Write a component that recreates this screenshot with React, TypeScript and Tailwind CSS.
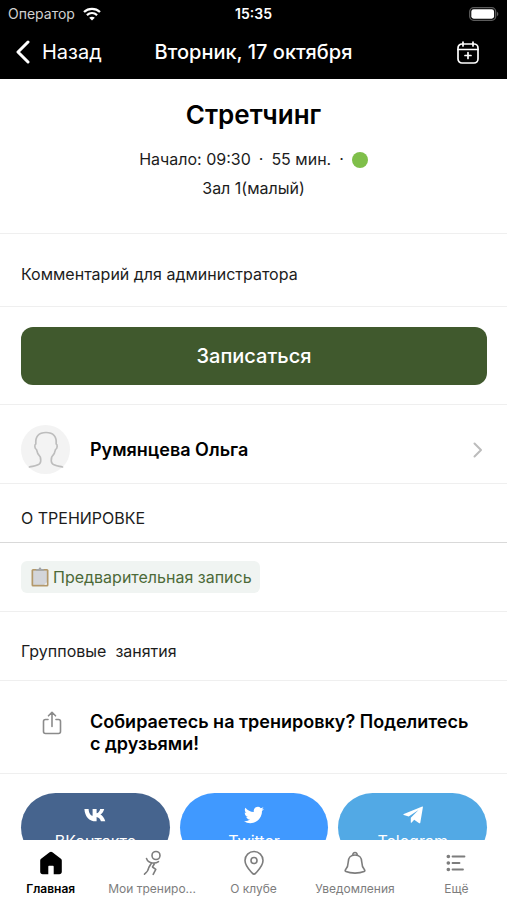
import type { ReactNode } from "react";

function BackIcon() {
  return (
    <svg width="14" height="24" viewBox="0 0 14 24" fill="none" stroke="currentColor" strokeWidth="3" strokeLinecap="round" strokeLinejoin="round" aria-hidden="true">
      <path d="M12 2 2 12l10 10" />
    </svg>
  );
}

function WifiIcon() {
  return (
    <svg width="18" height="14" viewBox="0 0 18 14" fill="none" stroke="currentColor" aria-hidden="true">
      <path d="M1 5C5.5.9 12.500.9 17 5" strokeWidth="2.300" />
      <path d="M3.900 8.100c3-2.700 7.200-2.700 10.200 0" strokeWidth="2.200" />
      <path d="M9 13.600 6.200 10.800c1.600-1.400 4-1.400 5.600 0z" fill="currentColor" stroke="none" />
    </svg>
  );
}

function BatteryIcon() {
  return (
    <svg width="30" height="14" viewBox="0 0 30 14" aria-hidden="true">
      <rect x=".7" y=".7" width="26" height="12.600" rx="4" fill="none" stroke="#5c5c5c" strokeWidth="1.300" />
      <rect x="2.300" y="2.300" width="22.800" height="9.400" rx="2.400" fill="#fff" />
      <path d="M28 4.800c1.800.7 1.800 3.700 0 4.400z" fill="#5c5c5c" />
    </svg>
  );
}

function CalendarPlusIcon() {
  return (
    <svg width="22" height="23" viewBox="0 0 22 23" fill="none" stroke="currentColor" strokeWidth="1.700" strokeLinecap="round" aria-hidden="true">
      <rect x="1" y="3" width="20" height="19" rx="4" />
      <path d="M1 8.500h20M6 1v4M16 1v4M11 11.500v6M8 14.500h6" />
    </svg>
  );
}

function PersonIcon() {
  return (
    <svg width="36" height="38" viewBox="0 0 36 38" fill="none" stroke="#bdbdbd" strokeWidth="1.700" strokeLinecap="round" strokeLinejoin="round" aria-hidden="true">
      <path d="M1.500 36c4-1 8.500-1.300 10.300-3.500 1.200-1.500 1-4.500.5-6.500C10 23.500 8.800 21 8.500 18.500 6.600 18 6.300 13.500 7.800 13 7.200 5.500 10.500 1.500 18 1.500S28.800 5.500 28.200 13c1.500.5 1.200 5-.7 5.500-.3 2.500-1.500 5-3.800 7.500-.5 2-.7 5 .5 6.500C26 34.700 30.500 35 34.500 36" />
    </svg>
  );
}

function ChevronIcon() {
  return (
    <svg width="10" height="16" viewBox="0 0 10 16" fill="none" stroke="#bcbcbc" strokeWidth="2" strokeLinecap="round" strokeLinejoin="round" aria-hidden="true">
      <path d="m1.500 1.500 6.500 6.500-6.500 6.500" />
    </svg>
  );
}

function ClipboardIcon() {
  return (
    <svg width="18" height="20" viewBox="0 0 18 20" aria-hidden="true">
      <rect x=".5" y="2" width="17" height="17.500" rx="1.500" fill="#b3986a" />
      <rect x="2.200" y="3.600" width="13.600" height="14.200" fill="#d3d5da" />
      <path d="M2.200 17.800h13.600v-2.600l-2.600 2.600z" fill="#f1f1f1" />
      <path d="M5 3.800V2.700c0-.4.300-.7.800-.7h1.800C7.800.9 8.200.4 9 .4s1.200.5 1.400 1.600h1.800c.5 0 .8.3.8.7v1.100z" fill="#a3a6aa" />
    </svg>
  );
}

function ShareIcon() {
  return (
    <svg width="20" height="24" viewBox="0 0 20 24" fill="none" stroke="#8b8b8b" strokeWidth="1.600" strokeLinecap="round" strokeLinejoin="round" aria-hidden="true">
      <path d="M6 8.500H3.500a2 2 0 0 0-2 2v10a2 2 0 0 0 2 2h13a2 2 0 0 0 2-2v-10a2 2 0 0 0-2-2H14M10 15.500V1.500M6.500 4.800 10 1.300l3.500 3.500" />
    </svg>
  );
}

function VkIcon() {
  return (
    <svg width="22" height="14" viewBox="0 0 22 14" fill="currentColor" aria-hidden="true">
      <path d="M12 13.300C5 13.300.9 8.200.4.900h4.200c.2 4.500 2.300 6.500 4 6.900V.9h4v4.300c1.500-.2 3-1.900 3.600-4.300h4c-.5 2.600-2.300 4.700-3.800 5.600 1.500.7 3.900 2.800 4.900 6.800h-4.400c-.7-2.300-2.400-4-4.300-4.200v4.200z" />
    </svg>
  );
}

function TwitterIcon() {
  return (
    <svg width="20" height="18" viewBox="0 2 24 20" fill="currentColor" aria-hidden="true">
      <path d="M23.950 4.570a10 10 0 0 1-2.820.77 4.960 4.960 0 0 0 2.160-2.720c-.95.550-2 .95-3.130 1.180a4.920 4.920 0 0 0-8.380 4.480C7.690 8.090 4.070 6.130 1.640 3.160a4.820 4.820 0 0 0-.67 2.480c0 1.710.87 3.210 2.190 4.100a4.900 4.900 0 0 1-2.230-.62v.06a4.920 4.920 0 0 0 3.950 4.830 5 5 0 0 1-2.210.08 4.940 4.940 0 0 0 4.600 3.420A9.870 9.870 0 0 1 0 19.540a14 14 0 0 0 7.560 2.210c9.050 0 14-7.500 14-13.980 0-.21 0-.42-.02-.63a9.940 9.940 0 0 0 2.410-2.570z" />
    </svg>
  );
}

function TelegramIcon() {
  return (
    <svg width="20" height="18" viewBox="0 0 20 18" fill="currentColor" aria-hidden="true">
      <path d="M.8 8.100 19.300.6c.5-.2.700.1.600.6l-2.600 15.500c-.1.600-.6.8-1.100.5l-5-3.500-2.500 2.900c-.4.400-.9.200-.9-.3v-4.500L15.500 3.900 5.700 10.400.8 9.100c-.6-.2-.6-.7 0-1z" />
    </svg>
  );
}

function HomeIcon() {
  return (
    <svg width="24" height="24" viewBox="0 0 24 24" fill="currentColor" aria-hidden="true">
      <path d="M12 .7c.5 0 1 .2 1.400.5l8.500 6.600c.6.500.9 1.100.9 1.800v11.200c0 1.500-1 2.500-2.500 2.500H14.700v-7.500c0-.6-.4-1-1-1h-3.400c-.6 0-1 .4-1 1v7.500H3.700c-1.500 0-2.500-1-2.500-2.500V9.600c0-.7.300-1.300.9-1.800l8.500-6.600c.4-.3.900-.5 1.400-.5z" />
    </svg>
  );
}

function RunnerIcon() {
  return (
    <svg width="24" height="26" viewBox="0 0 24 26" fill="none" stroke="currentColor" strokeWidth="1.600" strokeLinecap="round" strokeLinejoin="round" aria-hidden="true">
      <circle cx="16" cy="5.500" r="4" />
      <path d="M6.500 8.500c1 2.800 3 4.300 6 4.500 2.500.2 4.500-.2 6-1.300M11.500 13l-2.700 4.500M14.500 13.500 12.500 17l3.300 2.300-2.600 5M8.800 17.500c-.4 2.700-2 4.900-4.300 6.700" />
    </svg>
  );
}

function PinIcon() {
  return (
    <svg width="22" height="26" viewBox="0 0 22 26" fill="none" stroke="currentColor" strokeWidth="1.600" strokeLinejoin="round" aria-hidden="true">
      <path d="M11 1.500a9 9 0 0 0-9 9c0 5.500 4.500 9.500 7.500 12.900.9 1 2.100 1 3 0C15.500 20 20 16 20 10.500a9 9 0 0 0-9-9z" />
      <circle cx="11" cy="10.500" r="3" />
    </svg>
  );
}

function BellIcon() {
  return (
    <svg width="24" height="24" viewBox="0 0 24 24" fill="none" stroke="currentColor" strokeWidth="1.600" strokeLinecap="round" strokeLinejoin="round" aria-hidden="true">
      <path d="M12 4c-4.500 0-6.800 3.200-6.800 7.200 0 3.800-1 5.500-2.700 7.500-.6.700-.4 1.600.4 1.900 5 2 13.200 2 18.200 0 .8-.3 1-1.200.4-1.900-1.700-2-2.700-3.700-2.700-7.500C18.800 7.200 16.500 4 12 4z" />
      <path d="M9.800 4.200c0-1.700.8-2.700 2.200-2.700s2.200 1 2.200 2.700" />
    </svg>
  );
}

function ListIcon() {
  return (
    <svg width="20" height="18" viewBox="0 0 20 18" fill="none" stroke="currentColor" strokeLinecap="round" aria-hidden="true">
      <path d="M6.500 2.500h12M6.500 9h7M6.500 15.500h10.500" strokeWidth="1.800" />
      <path d="M2.300 2.500h.1M2.300 9h.1M2.300 15.500h.1" strokeWidth="3.600" />
    </svg>
  );
}

function ShareButton({ color, icon, label }: { color: string; icon: ReactNode; label: string }) {
  return (
    <button type="button" className={`flex h-[69px] flex-1 flex-col items-center rounded-full pt-3 text-base text-white ${color}`}>
      <span className="flex h-5 items-center">{icon}</span>
      <span className="mt-1 leading-6">{label}</span>
    </button>
  );
}

function Tab({ icon, label, active = false }: { icon: ReactNode; label: string; active?: boolean }) {
  return (
    <a
      href="#"
      aria-current={active ? "page" : undefined}
      className={`flex flex-1 flex-col items-center text-xs whitespace-nowrap ${active ? "font-semibold text-black" : "text-[#7d7d7d]"}`}
    >
      <span className="flex h-7 items-center">{icon}</span>
      <span className="mt-1 leading-4">{label}</span>
    </a>
  );
}

export default function App() {
  return (
    <div className="flex h-screen flex-col overflow-hidden bg-white font-['Inter','Liberation_Sans',sans-serif] text-[#1c1c1c]">
      <header className="bg-black pb-[3px] text-white">
        <div className="grid h-7 grid-cols-[1fr_auto_1fr] items-center px-2 text-sm">
          <span className="flex items-center gap-2 text-[#d0d0d0]">
            Оператор
            <span className="text-white"><WifiIcon /></span>
          </span>
          <span className="font-semibold">15:35</span>
          <span className="flex justify-end"><BatteryIcon /></span>
        </div>
        <div className="grid h-12 grid-cols-[1fr_auto_1fr] items-center px-4 text-xl">
          <button type="button" className="flex items-center gap-3 justify-self-start">
            <BackIcon />
            Назад
          </button>
          <h1 className="font-medium">Вторник, 17 октября</h1>
          <button type="button" aria-label="Добавить в календарь" className="justify-self-end px-3">
            <CalendarPlusIcon />
          </button>
        </div>
      </header>

      <main className="min-h-0 flex-1 overflow-y-auto [scrollbar-width:none]">
        <section className="border-b border-[#efefef] pt-5 pb-[30px] text-center">
          <h2 className="mb-3.5 text-[26px] leading-8 font-semibold text-black">Стретчинг</h2>
          <p className="flex items-center justify-center text-base leading-[29px]">
            <span>Начало: 09:30</span>
            <span className="mx-2">·</span>
            <span>55 мин.</span>
            <span className="mx-2">·</span>
            <span className="size-4 rounded-full bg-[#7fbf4a]" />
          </p>
          <p className="text-base leading-[29px]">Зал 1(малый)</p>
        </section>

        <section className="border-b border-[#efefef] pt-7 pr-5 pb-5 pl-[21px]">
          <input
            type="text"
            aria-label="Комментарий для администратора"
            placeholder="Комментарий для администратора"
            className="block h-6 w-full text-base outline-none placeholder:text-[#1c1c1c]"
          />
        </section>

        <section className="border-b border-[#efefef] pt-5 pr-5 pb-[19px] pl-[21px]">
          <button type="button" className="h-[58px] w-full rounded-xl bg-[#40592d] text-xl font-medium text-white">
            Записаться
          </button>
        </section>

        <a href="#" className="flex items-center border-b border-[#efefef] pt-5 pr-6 pb-[9px] pl-[21px]">
          <span className="flex size-[49px] items-center justify-center rounded-full bg-[#f3f3f3]">
            <PersonIcon />
          </span>
          <span className="ml-5 flex-1 text-lg font-semibold text-black">Румянцева Ольга</span>
          <ChevronIcon />
        </a>

        <h3 className="border-b border-[#d9d9d9] pt-[22px] pr-5 pb-3 pl-[21px] text-base">О ТРЕНИРОВКЕ</h3>

        <section className="border-b border-[#efefef] py-[18px] pr-5 pl-[21px]">
          <span className="inline-flex h-8 items-center gap-1 rounded-md bg-[#f0f4f2] px-2 align-top text-base text-[#4c6a38]">
            <span className="pl-0.5"><ClipboardIcon /></span>
            Предварительная запись
          </span>
        </section>

        <p className="border-b border-[#efefef] pt-[27px] pr-5 pb-[17px] pl-[21px] text-base whitespace-pre">Групповые  занятия</p>

        <section className="flex items-start border-b border-[#efefef] pt-[30px] pr-7 pb-[18px] pl-[21px]">
          <span className="flex w-[49px] justify-center pl-3"><ShareIcon /></span>
          <p className="ml-5 flex-1 text-lg leading-[22px] font-semibold text-black">
            Собираетесь на тренировку? Поделитесь с&nbsp;друзьями!
          </p>
        </section>

        <section className="flex gap-2.5 pt-[19px] pr-5 pb-5 pl-[21px]">
          <ShareButton color="bg-[#46648e]" icon={<VkIcon />} label="ВКонтакте" />
          <ShareButton color="bg-[#4099ff]" icon={<TwitterIcon />} label="Twitter" />
          <ShareButton color="bg-[#52a9e5]" icon={<TelegramIcon />} label="Telegram" />
        </section>
      </main>

      <nav className="flex h-15 shrink-0 bg-white pt-[9px]">
        <Tab icon={<HomeIcon />} label="Главная" active />
        <Tab icon={<RunnerIcon />} label="Мои трениро..." />
        <Tab icon={<PinIcon />} label="О клубе" />
        <Tab icon={<BellIcon />} label="Уведомления" />
        <Tab icon={<ListIcon />} label="Ещё" />
      </nav>
    </div>
  );
}
